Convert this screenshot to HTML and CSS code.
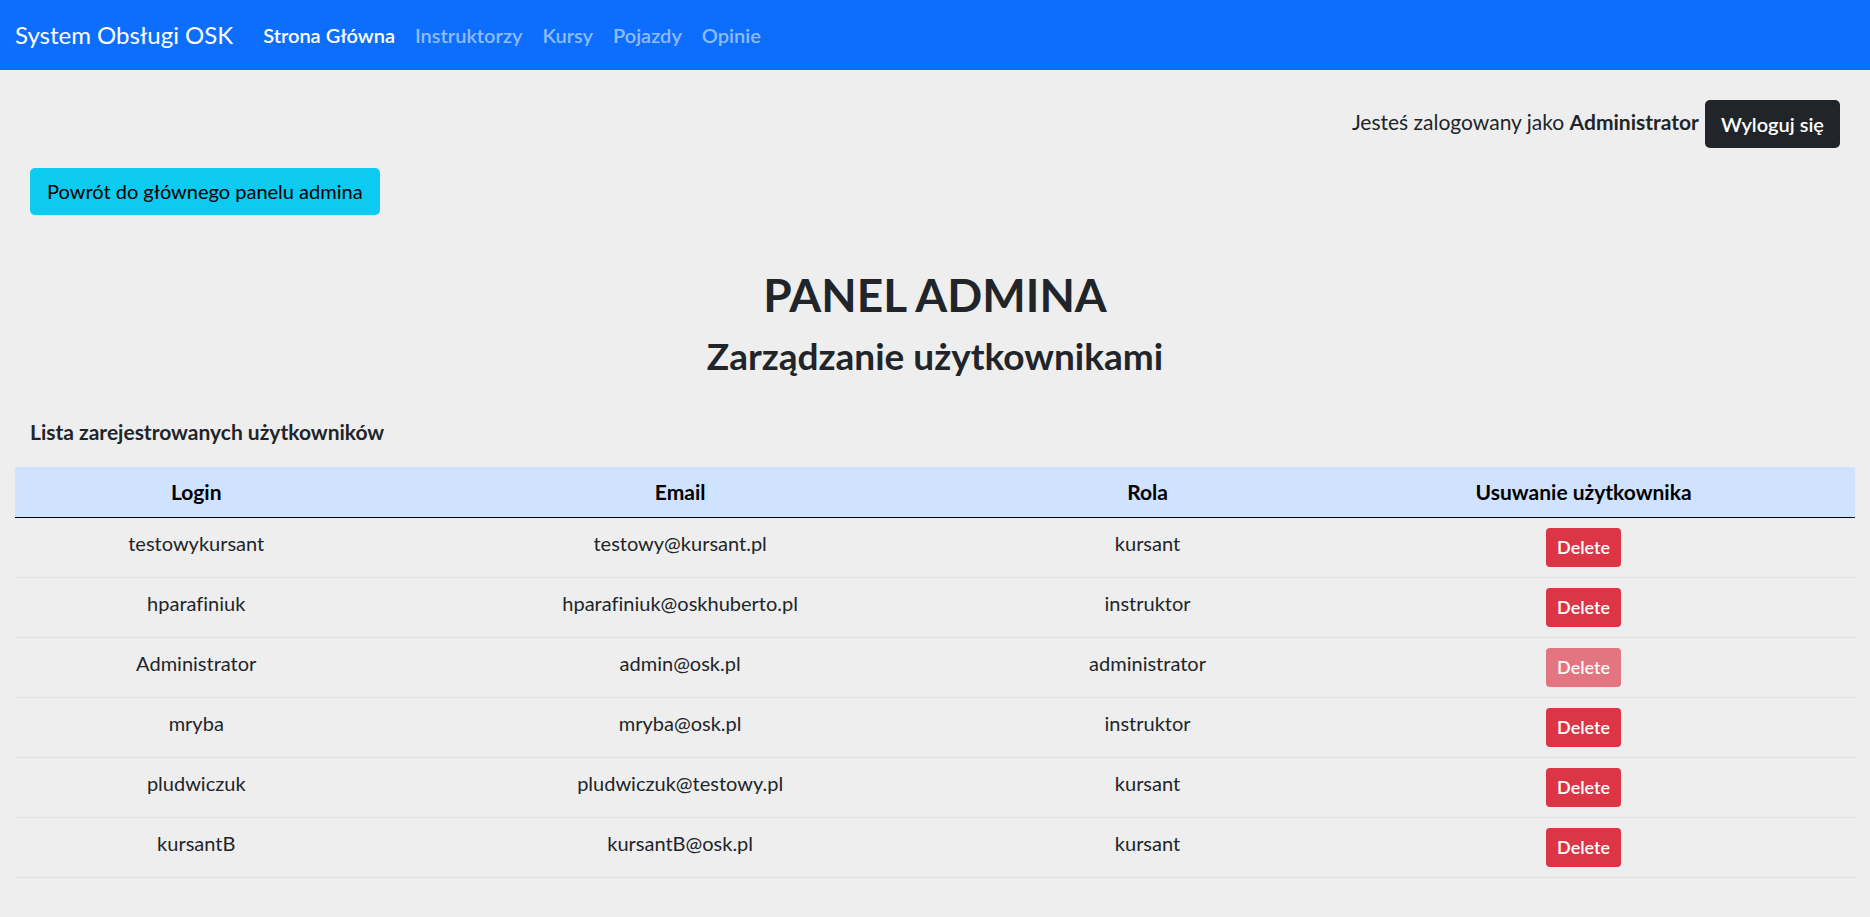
FILE: index.html
```html
<!DOCTYPE html>
<html lang="pl">
<head>
<meta charset="utf-8">
<title>System Obsługi OSK</title>
<link rel="stylesheet" href="styles.css">
</head>
<body>
<nav class="navbar">
  <a class="brand" href="#">System Obsługi OSK</a>
  <ul class="nav-list">
    <li><a class="nav-link active" href="#">Strona Główna</a></li>
    <li><a class="nav-link" href="#">Instruktorzy</a></li>
    <li><a class="nav-link" href="#">Kursy</a></li>
    <li><a class="nav-link" href="#">Pojazdy</a></li>
    <li><a class="nav-link" href="#">Opinie</a></li>
  </ul>
</nav>
<main class="page">
  <div class="session">
    <span class="session-text">Jesteś zalogowany jako <strong>Administrator</strong></span>
    <button class="btn btn-dark" type="button">Wyloguj się</button>
  </div>
  <div class="back"><a class="btn btn-info" href="#">Powrót do głównego panelu admina</a></div>
  <header class="titles">
    <h1 class="title">PANEL ADMINA</h1>
    <h2 class="subtitle">Zarządzanie użytkownikami</h2>
  </header>
  <h3 class="list-title">Lista zarejestrowanych użytkowników</h3>
  <table class="users">
    <colgroup><col class="col-login"><col class="col-email"><col class="col-role"><col class="col-delete"></colgroup>
    <thead>
      <tr><th scope="col">Login</th><th scope="col">Email</th><th scope="col">Rola</th><th scope="col">Usuwanie użytkownika</th></tr>
    </thead>
    <tbody>
      <tr><td>testowykursant</td><td>testowy@kursant.pl</td><td>kursant</td><td><button class="btn btn-danger" type="button">Delete</button></td></tr>
      <tr><td>hparafiniuk</td><td>hparafiniuk@oskhuberto.pl</td><td>instruktor</td><td><button class="btn btn-danger" type="button">Delete</button></td></tr>
      <tr><td>Administrator</td><td>admin@osk.pl</td><td>administrator</td><td><button class="btn btn-danger" type="button" disabled>Delete</button></td></tr>
      <tr><td>mryba</td><td>mryba@osk.pl</td><td>instruktor</td><td><button class="btn btn-danger" type="button">Delete</button></td></tr>
      <tr><td>pludwiczuk</td><td>pludwiczuk@testowy.pl</td><td>kursant</td><td><button class="btn btn-danger" type="button">Delete</button></td></tr>
      <tr><td>kursantB</td><td>kursantB@osk.pl</td><td>kursant</td><td><button class="btn btn-danger" type="button">Delete</button></td></tr>
    </tbody>
  </table>
</main>
</body>
</html>
```
FILE: styles.css
```css
* { box-sizing: border-box; }

body {
  margin: 0;
  background: #eeeeee;
  color: #212529;
  font-family: "Trebuchet MS", Lato, "Open Sans", sans-serif;
  font-size: 20px;
  font-variant-ligatures: none;
  line-height: 30px;
}

a { text-decoration: none; }

.navbar {
  display: flex;
  align-items: center;
  gap: 20px;
  padding: 10px 15px;
  background: #0d6efd;
}

.brand {
  padding: 6px 0;
  color: #fff;
  font-size: 24px;
  line-height: 38px;
}

.nav-list {
  display: flex;
  margin: 0;
  padding: 0;
  list-style: none;
}

.nav-link {
  display: block;
  padding: 10px;
  color: rgba(255, 255, 255, 0.55);
  font-weight: 600;
}

.nav-link.active { color: #fff; }

.page { padding: 30px 15px; }

.session {
  display: flex;
  justify-content: flex-end;
  align-items: center;
  gap: 6px;
  padding: 0 15px;
}

.session-text {
  padding-bottom: 4px;
  font-size: 21px;
}

.btn {
  display: inline-block;
  border: 1px solid transparent;
  border-radius: 5px;
  padding: 8px 15px;
  font: inherit;
  text-align: center;
}

.btn-dark {
  background: #212529;
  color: #fff;
  font-weight: 600;
}

.btn-info {
  padding: 7px 16px 8px;
  background: #0dcaf0;
  color: #000;
}

.btn-danger {
  display: block;
  margin: 0 auto;
  padding: 5px 10px;
  border-radius: 4px;
  background: #dc3545;
  color: #fff;
  font-size: 18px;
  font-weight: 600;
  line-height: 27px;
}

.btn-danger:disabled { opacity: 0.65; }

.back {
  display: flex;
  padding: 20px 15px 0;
}

.titles {
  padding-top: 50px;
  text-align: center;
}

.title {
  margin: 0 0 10px;
  font-size: 46px;
  line-height: 60px;
}

.subtitle {
  margin: 0;
  font-size: 37px;
  line-height: 42px;
}

.list-title {
  margin: 0;
  padding: 40px 15px 20px;
  font-size: 21px;
}

.users {
  width: 100%;
  border-collapse: separate;
  border-spacing: 0;
  table-layout: fixed;
  text-align: center;
}

.col-login { width: 19.7%; }
.col-email { width: 32.9%; }
.col-role { width: 17.9%; }
.col-delete { width: 29.5%; }

.users th {
  padding: 10px;
  border-bottom: 1px solid #000;
  background: #cfe2ff;
  color: #000;
  font-size: 21px;
}

.users td {
  padding: 10px;
  border-bottom: 1px solid #dfe0e1;
  vertical-align: top;
}
```
